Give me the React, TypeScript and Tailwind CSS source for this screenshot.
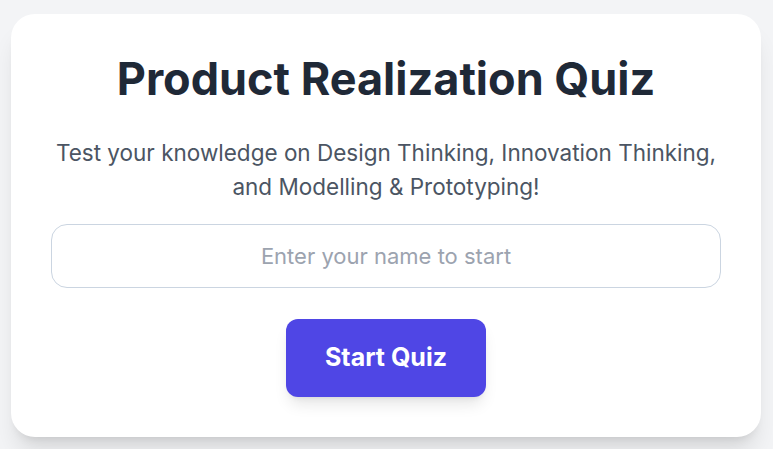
export default function App() {
  return (
    <div className="min-h-screen bg-[#f3f4f6] px-[11px] pt-[14px] font-['Inter',sans-serif]">
      <div className="w-[750px] rounded-3xl bg-white p-10 text-center shadow-xl">
        <h1 className="pt-[2px] text-[45px] font-bold leading-[46px] text-[#1f2937]">Product Realization Quiz</h1>
        <p className="mt-[34px] text-[22.5px] leading-[34px] text-[#4b5563]">
          Test your knowledge on Design Thinking, Innovation Thinking,
          <br />
          and Modelling &amp; Prototyping!
        </p>
        <input
          type="text"
          placeholder="Enter your name to start"
          className="mt-5 h-16 w-full rounded-2xl border border-[#cbd5e1] px-4 text-center text-[22px] text-[#1f2937] outline-none placeholder:text-[#9ca3af]"
        />
        <button className="mt-[31px] rounded-xl bg-[#4f46e5] px-[39px] pt-[22px] pb-[23px] text-[25px] font-bold leading-[33px] text-white shadow-lg">
          Start Quiz
        </button>
      </div>
    </div>
  );
}
